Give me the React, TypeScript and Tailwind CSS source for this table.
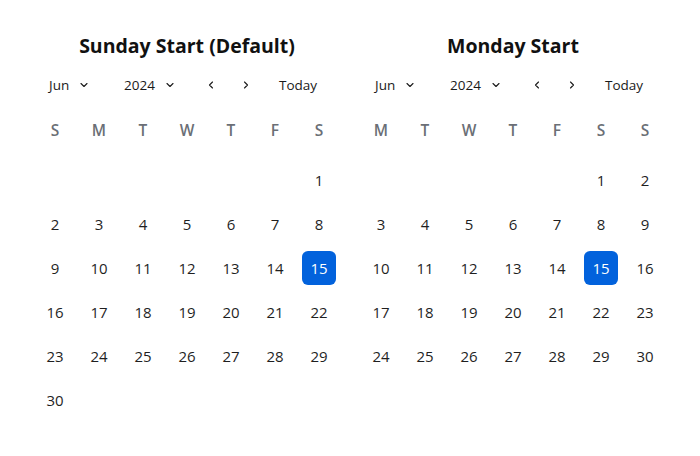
import { ChevronDown, ChevronLeft, ChevronRight } from "lucide-react";

type Cal = { title: string; weekdays: string[]; offset: number };

const calendars: Cal[] = [
  { title: "Sunday Start (Default)", weekdays: ["S", "M", "T", "W", "T", "F", "S"], offset: 6 },
  { title: "Monday Start", weekdays: ["M", "T", "W", "T", "F", "S", "S"], offset: 5 },
];

function Calendar({ cal }: { cal: Cal }) {
  const cells: (number | null)[] = [
    ...Array.from({ length: cal.offset }, () => null),
    ...Array.from({ length: 30 }, (_, i) => i + 1),
  ];
  return (
    <div className="w-[308px]">
      <h2 className="h-[28px] text-center text-[19.5px] font-bold leading-[28px] text-[#111]">{cal.title}</h2>
      <div className="mt-[9px] flex h-[32px] items-center pl-4 text-[13.5px] text-[#1a1a1a]">
        <div className="flex w-[75px] items-center gap-[9px]">
          <span>Jun</span>
          <ChevronDown size={12} strokeWidth={2.2} />
        </div>
        <div className="flex w-[76px] items-center gap-[9px]">
          <span>2024</span>
          <ChevronDown size={12} strokeWidth={2.2} />
        </div>
        <div className="flex w-[22px] justify-center">
          <ChevronLeft size={12} strokeWidth={2.2} />
        </div>
        <div className="ml-[13px] flex w-[22px] justify-center">
          <ChevronRight size={12} strokeWidth={2.2} />
        </div>
        <span className="ml-[22px]">Today</span>
      </div>
      <div className="mt-[8px] grid grid-cols-7">
        {cal.weekdays.map((d, i) => (
          <div key={i} className="flex h-[44px] items-center justify-center text-[15.5px] font-semibold text-[#6b6f76]">
            {d}
          </div>
        ))}
      </div>
      <div className="mt-[5px] grid grid-cols-7">
        {cells.map((n, i) => (
          <div key={i} className="flex h-[44px] items-center justify-center">
            {n !== null && (
              <span
                className={
                  n === 15
                    ? "flex h-[34px] w-[34px] items-center justify-center rounded-[6px] bg-[#0262dc] text-[15px] text-white"
                    : "text-[15px] text-[#1f1f1f]"
                }
              >
                {n}
              </span>
            )}
          </div>
        ))}
      </div>
    </div>
  );
}

export default function App() {
  return (
    <div className="flex h-[456px] w-[700px] justify-center gap-[18px] bg-white pt-[32px] font-['Open_Sans',sans-serif]">
      {calendars.map((c) => (
        <Calendar key={c.title} cal={c} />
      ))}
    </div>
  );
}
